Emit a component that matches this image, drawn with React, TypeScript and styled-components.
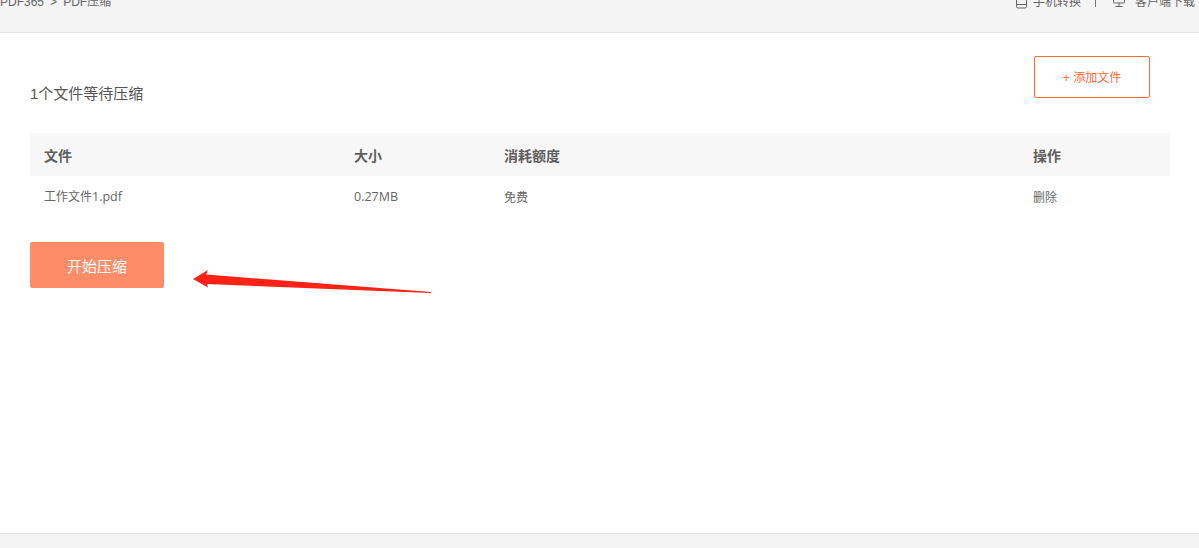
import React from "react";
import styled, { createGlobalStyle } from "styled-components";

const Global = createGlobalStyle`
  html, body { margin: 0; padding: 0; background: #fff; }
  body { font-family: "Liberation Sans", "Noto Sans CJK SC", sans-serif; color: #666; overflow: hidden; }
`;
const Page = styled.div`
  position: relative;
  width: 1199px;
  height: 548px;
  display: flex;
  flex-direction: column;
  overflow: hidden;
`;
const TopBar = styled.header`
  flex: none;
  height: 32px;
  background: #f4f4f4;
  border-bottom: 1px solid #e4e4e4;
  display: flex;
  justify-content: space-between;
  align-items: flex-start;
  overflow: hidden;
  font-size: 12px;
  line-height: 20px;
  color: #666;
`;
const Crumbs = styled.div`
  margin-top: -8px;
  white-space: pre;
  word-spacing: -0.3px;
`;
const TopLinks = styled.div`
  margin-top: -8px;
  padding-right: 4px;
  display: flex;
  align-items: center;
  white-space: nowrap;
`;
const TopLink = styled.span<{ $gap: number }>`
  display: inline-flex;
  align-items: center;
  gap: ${(p) => p.$gap}px;
`;
const Divider = styled.span`
  width: 1px;
  height: 9px;
  margin: 0 16px 0 14px;
  background: #777;
`;
const Main = styled.main`
  flex: 1;
  padding: 23px 29px 0 30px;
`;
const TitleRow = styled.div`
  display: flex;
  justify-content: space-between;
  align-items: flex-start;
  height: 77px;
`;
const Title = styled.h2`
  margin: 28px 0 0;
  font-size: 15px;
  line-height: 20px;
  font-weight: 400;
  color: #555;
`;
const AddButton = styled.button`
  width: 116px;
  height: 42px;
  margin-right: 20px;
  box-sizing: border-box;
  background: #fff;
  border: 1px solid #ff6a36;
  border-radius: 2px;
  color: #ff6a36;
  font: inherit;
  font-size: 12px;
  padding: 0 0 2px;
`;
const Table = styled.div`
  font-size: 12px;
`;
const Row = styled.div<{ $head?: boolean }>`
  display: grid;
  grid-template-columns: 310px 150px 529px 1fr;
  align-items: center;
  box-sizing: border-box;
  height: ${(p) => (p.$head ? "43px" : "42px")};
  padding: ${(p) => (p.$head ? "0 0 0 14px" : "0 0 2px 14px")};
  background: ${(p) => (p.$head ? "#f7f7f7" : "#fff")};
  font-weight: ${(p) => (p.$head ? 700 : 400)};
  font-size: ${(p) => (p.$head ? "14px" : "12px")};
  color: ${(p) => (p.$head ? "#5f5f5f" : "#666")};
`;
const Latin = styled.span`
  font-family: "Open Sans", sans-serif;
  font-size: 12.5px;
`;
const StartButton = styled.button`
  display: block;
  width: 134px;
  height: 46px;
  margin-top: 24px;
  border: 0;
  border-radius: 2px;
  background: #ff8c69;
  color: #fff;
  font: inherit;
  font-size: 15px;
  padding: 1px 0 0;
`;
const Footer = styled.footer`
  flex: none;
  height: 14px;
  background: #f3f3f3;
  border-top: 1px solid #e2e2e2;
`;
const Arrow = styled.svg`
  position: absolute;
  left: 0;
  top: 0;
  pointer-events: none;
`;

export default function App() {
  return (
    <Page>
      <Global />
      <TopBar>
        <Crumbs>PDF365  &gt;  PDF压缩</Crumbs>
        <TopLinks>
          <TopLink $gap={6}>
            <svg width="11" height="18" viewBox="0 0 11 18" fill="none" stroke="#666" strokeWidth="1">
              <rect x="0.5" y="-1.5" width="10" height="16.5" rx="1.5" />
              <path d="M0.5 11.5h10" />
            </svg>
            手机转换
          </TopLink>
          <Divider />
          <TopLink $gap={9}>
            <svg width="14" height="18" viewBox="0 0 14 18" fill="none" stroke="#666" strokeWidth="1">
              <rect x="1.5" y="-2.5" width="11" height="12.5" rx="1" />
              <path d="M7 10v3.5M3.5 13.5h7" />
            </svg>
            客户端下载
          </TopLink>
        </TopLinks>
      </TopBar>
      <Main>
        <TitleRow>
          <Title>1个文件等待压缩</Title>
          <AddButton>+ 添加文件</AddButton>
        </TitleRow>
        <Table>
          <Row $head>
            <span>文件</span>
            <span>大小</span>
            <span>消耗额度</span>
            <span>操作</span>
          </Row>
          <Row>
            <span>工作文件<Latin>1.pdf</Latin></span>
            <Latin>0.27MB</Latin>
            <span>免费</span>
            <span>删除</span>
          </Row>
        </Table>
        <StartButton>开始压缩</StartButton>
      </Main>
      <Footer />
      <Arrow width="1199" height="548" viewBox="0 0 1199 548">
        <polygon points="193,279 208,270 206,274.5 431,292 431,293 207,284 208,287.5" fill="#fe2116" />
      </Arrow>
    </Page>
  );
}
